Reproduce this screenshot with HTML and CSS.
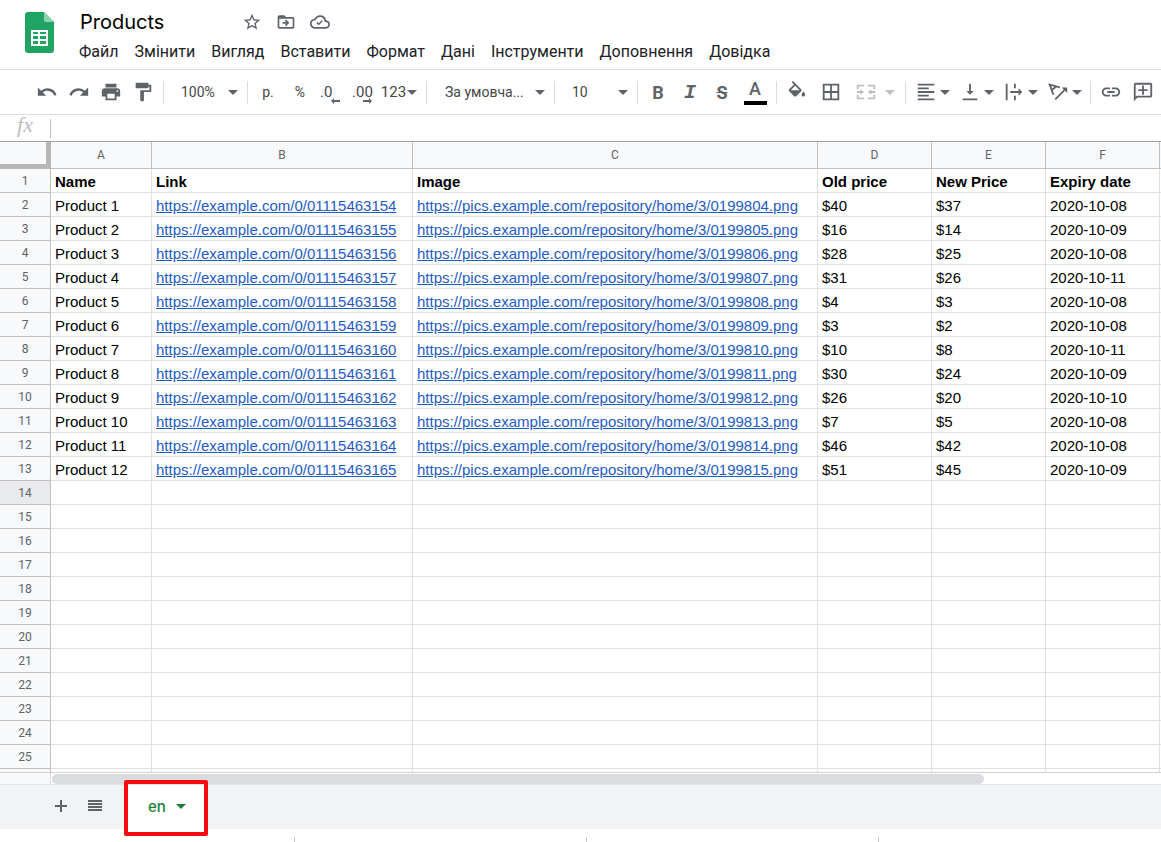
FILE: index.html
```html
<!DOCTYPE html>
<html lang="uk">
<head>
    <meta charset="UTF-8">
    <meta name="viewport" content="width=device-width, initial-scale=1.0">
    <title>Products</title>
    <link rel="stylesheet" href="styles.css">
</head>
<body>
    <header class="header">
        <svg class="logo" viewBox="0 0 29 41" aria-hidden="true">
            <path fill="#1fa463" d="M3 0h16l10 10v28a3 3 0 0 1-3 3H3a3 3 0 0 1-3-3V3a3 3 0 0 1 3-3z"/>
            <path fill="#8ed1b1" d="M19 0l10 10h-8a2 2 0 0 1-2-2z"/>
            <path fill="#fff" fill-rule="evenodd" d="M6 18h17v16H6zM8 20v2h5v-2zm7 0v2h6v-2zM8 24v3h5v-3zm7 0v3h6v-3zM8 29v3h5v-3zm7 0v3h6v-3z"/>
        </svg>
        <div class="header-main">
            <div class="title-row">
                <input class="doc-title" type="text" value="Products" aria-label="Назва">
                <button class="title-btn" aria-label="Позначити">
                    <svg viewBox="0 0 24 24"><path d="M22 9.24l-7.19-.62L12 2 9.19 8.63 2 9.24l5.46 4.73L5.82 21 12 17.27 18.18 21l-1.63-7.03L22 9.24zM12 15.4l-3.76 2.27 1-4.28-3.32-2.88 4.38-.38L12 6.1l1.71 4.04 4.38.38-3.32 2.88 1 4.28L12 15.4z"/></svg>
                </button>
                <button class="title-btn" aria-label="Перемістити">
                    <svg viewBox="0 0 24 24"><path d="M20 6h-8l-2-2H4c-1.100 0-2 .9-2 2v12c0 1.100.9 2 2 2h16c1.100 0 2-.9 2-2V8c0-1.100-.9-2-2-2zm0 12H4V8h16v10zm-8-1l4-4-4-4-1.400 1.400L12.200 12H8v2h4.200l-1.600 1.600z"/></svg>
                </button>
                <button class="title-btn" aria-label="Стан документа">
                    <svg viewBox="0 0 24 24"><path d="M19.350 10.040A7.490 7.490 0 0 0 12 4C9.110 4 6.600 5.640 5.350 8.040A5.994 5.994 0 0 0 0 14c0 3.310 2.690 6 6 6h13c2.760 0 5-2.240 5-5 0-2.640-2.050-4.780-4.650-4.960zM19 18H6c-2.210 0-4-1.790-4-4 0-2.050 1.530-3.760 3.560-3.970l1.070-.11.5-.95A5.469 5.469 0 0 1 12 6c2.620 0 4.880 1.860 5.390 4.430l.3 1.500 1.530.11A2.980 2.980 0 0 1 22 15c0 1.650-1.350 3-3 3zm-8.500-4.600l-1.600-1.600-1.300 1.300 2.900 2.900 4.900-4.900-1.300-1.300z"/></svg>
                </button>
            </div>
            <nav class="menu">
                <a href="#">Файл</a>
                <a href="#">Змінити</a>
                <a href="#">Вигляд</a>
                <a href="#">Вставити</a>
                <a href="#">Формат</a>
                <a href="#">Дані</a>
                <a href="#">Інструменти</a>
                <a href="#">Доповнення</a>
                <a href="#">Довідка</a>
            </nav>
        </div>
    </header>

    <div class="toolbar">
        <button class="tool" aria-label="Скасувати">
            <svg viewBox="0 0 24 24"><path d="M12.500 8c-2.650 0-5.050.99-6.900 2.600L2 7v9h9l-3.620-3.620c1.390-1.160 3.160-1.880 5.120-1.880 3.540 0 6.550 2.310 7.600 5.500l2.370-.78C21.080 11.030 17.150 8 12.500 8z"/></svg>
        </button>
        <button class="tool" aria-label="Повторити">
            <svg viewBox="0 0 24 24"><path d="M18.400 10.600C16.550 8.990 14.150 8 11.500 8c-4.650 0-8.580 3.030-9.960 7.220L3.900 16c1.050-3.190 4.050-5.500 7.600-5.500 1.950 0 3.730.72 5.120 1.880L13 16h9V7l-3.600 3.600z"/></svg>
        </button>
        <button class="tool" aria-label="Друк">
            <svg viewBox="0 0 24 24"><path d="M19 8H5c-1.660 0-3 1.340-3 3v6h4v4h12v-4h4v-6c0-1.660-1.340-3-3-3zm-3 11H8v-5h8v5zm3-7c-.55 0-1-.45-1-1s.45-1 1-1 1 .45 1 1-.45 1-1 1zM18 3H6v4h12V3z"/></svg>
        </button>
        <button class="tool" aria-label="Копіювати формат">
            <svg viewBox="0 0 24 24"><path d="M18 4V3c0-.55-.45-1-1-1H5c-.55 0-1 .45-1 1v4c0 .55.45 1 1 1h12c.55 0 1-.45 1-1V6h1v4H9v11c0 .55.45 1 1 1h2c.55 0 1-.45 1-1v-9h8V4h-3z"/></svg>
        </button>
        <span class="sep"></span>
        <div class="dropdown zoom">
            <select aria-label="Масштаб"><option>100%</option></select>
        </div>
        <span class="sep"></span>
        <button class="tool">р.</button>
        <button class="tool">%</button>
        <button class="tool decimals">.0
            <svg viewBox="0 0 9 6"><path d="M0 3l3-3v2h6v2H3v2z"/></svg>
        </button>
        <button class="tool decimals">.00
            <svg viewBox="0 0 9 6"><path d="M9 3L6 0v2H0v2h6v2z"/></svg>
        </button>
        <button class="tool formats">123<i class="arrow"></i></button>
        <span class="sep"></span>
        <div class="dropdown font">
            <select aria-label="Шрифт"><option>За умовча...</option></select>
        </div>
        <span class="sep"></span>
        <div class="dropdown size">
            <select aria-label="Розмір шрифту"><option>10</option></select>
        </div>
        <span class="sep"></span>
        <button class="tool bold">B</button>
        <button class="tool italic">I</button>
        <button class="tool strike">S</button>
        <button class="tool color"><span>A</span></button>
        <span class="sep"></span>
        <button class="tool" aria-label="Колір заливки">
            <svg viewBox="0 0 24 24"><path d="M16.560 8.940L7.620 0 6.210 1.410l2.380 2.380-5.150 5.150c-.59.59-.59 1.540 0 2.120l5.500 5.500c.29.29.68.44 1.060.44s.77-.15 1.060-.44l5.500-5.500c.59-.58.59-1.530 0-2.120zM5.210 10L10 5.210 14.790 10H5.210zM19 11.500s-2 2.170-2 3.500c0 1.100.9 2 2 2s2-.9 2-2c0-1.330-2-3.500-2-3.500z"/></svg>
        </button>
        <button class="tool borders" aria-label="Межі">
            <svg viewBox="0 0 24 24"><path d="M3 3v18h18V3H3zm8 16H5v-6h6v6zm0-8H5V5h6v6zm8 8h-6v-6h6v6zm0-8h-6V5h6v6z"/></svg>
        </button>
        <button class="tool merge" disabled aria-label="Об'єднати клітинки">
            <svg viewBox="0 0 24 24"><path d="M2 4h8v2H4v3H2zM14 4h8v5h-2V6h-6zM2 15h2v3h6v2H2zM20 15h2v5h-8v-2h6zM2 11h4V9l4 3-4 3v-2H2zM22 11h-4V9l-4 3 4 3v-2h4z"/></svg>
            <i class="arrow"></i>
        </button>
        <span class="sep"></span>
        <button class="tool wide" aria-label="Вирівнювання по горизонталі">
            <svg viewBox="0 0 24 24"><path d="M15 15H3v2h12v-2zm0-8H3v2h12V7zM3 13h18v-2H3v2zm0 8h18v-2H3v2zM3 3v2h18V3H3z"/></svg>
            <i class="arrow"></i>
        </button>
        <button class="tool wide" aria-label="Вирівнювання по вертикалі">
            <svg viewBox="0 0 24 24"><path d="M16 11h-3V3h-2v8H8l4 4 4-4zM4 19v2h16v-2H4z"/></svg>
            <i class="arrow"></i>
        </button>
        <button class="tool wide" aria-label="Перенесення тексту">
            <svg viewBox="0 0 24 24"><path d="M3 3h2v18H3zM12 3h2v5h-2zM12 16h2v5h-2zM8 11h9V8l4 4-4 4v-3H8z"/></svg>
            <i class="arrow"></i>
        </button>
        <button class="tool wide" aria-label="Обертання тексту">
            <svg viewBox="0 0 24 24"><path class="line" d="M7 15L3 4l11 3M5 10l5-4M9 20l10-10"/><path d="M16 7h6v6z"/></svg>
            <i class="arrow"></i>
        </button>
        <span class="sep"></span>
        <button class="tool" aria-label="Вставити посилання">
            <svg viewBox="0 0 24 24"><path d="M3.900 12c0-1.710 1.390-3.100 3.100-3.100h4V7H7c-2.760 0-5 2.240-5 5s2.240 5 5 5h4v-1.900H7c-1.710 0-3.100-1.390-3.100-3.100zM8 13h8v-2H8v2zm9-6h-4v1.900h4c1.710 0 3.100 1.390 3.100 3.100s-1.390 3.100-3.100 3.100h-4V17h4c2.760 0 5-2.240 5-5s-2.240-5-5-5z"/></svg>
        </button>
        <button class="tool" aria-label="Додати коментар">
            <svg viewBox="0 0 24 24"><path d="M20 2H4c-1.100 0-2 .9-2 2v18l4-4h14c1.100 0 2-.9 2-2V4c0-1.100-.9-2-2-2zm0 14H5.200L4 17.200V4h16v12zM11 15h2v-4h4V9h-4V5h-2v4H7v2h4z"/></svg>
        </button>
    </div>

    <div class="formula-bar">
        <label class="fx" for="formula">fx</label>
        <input class="formula" id="formula" type="text">
    </div>

    <main class="grid">
        <table>
            <colgroup>
                <col class="col-num">
                <col class="col-name">
                <col class="col-link">
                <col class="col-image">
                <col class="col-data">
                <col class="col-data">
                <col class="col-data">
                <col>
            </colgroup>
            <thead>
                <tr>
                    <th class="corner"></th>
                    <th>A</th>
                    <th>B</th>
                    <th>C</th>
                    <th>D</th>
                    <th>E</th>
                    <th>F</th>
                    <th></th>
                </tr>
            </thead>
            <tbody id="rows"></tbody>
        </table>
    </main>

    <div class="scroll">
        <div class="scroll-track"><div class="scroll-thumb"></div></div>
    </div>

    <div class="tabs">
        <button class="tab-btn" aria-label="Додати аркуш">
            <svg viewBox="0 0 14 14"><path d="M6 1h2v5h5v2H8v5H6V8H1V6h5z"/></svg>
        </button>
        <button class="tab-btn" aria-label="Усі аркуші">
            <svg viewBox="0 0 14 14"><path d="M0 1h14v2H0zM0 4h14v2H0zM0 7h14v2H0zM0 10h14v2H0z"/></svg>
        </button>
        <div class="tab-wrap">
            <button class="tab">en<i class="arrow"></i></button>
            <span class="highlight"></span>
        </div>
    </div>

    <footer class="footer"><span></span><span></span><span></span></footer>

    <script>
        // old price, new price, expiry date
        const products = [
            [40, 37, '2020-10-08'],
            [16, 14, '2020-10-09'],
            [28, 25, '2020-10-08'],
            [31, 26, '2020-10-11'],
            [4, 3, '2020-10-08'],
            [3, 2, '2020-10-08'],
            [10, 8, '2020-10-11'],
            [30, 24, '2020-10-09'],
            [26, 20, '2020-10-10'],
            [7, 5, '2020-10-08'],
            [46, 42, '2020-10-08'],
            [51, 45, '2020-10-09']
        ];

        function link(url) {
            return `<a href="${url}">${url}</a>`;
        }

        const rows = [['Name', 'Link', 'Image', 'Old price', 'New Price', 'Expiry date']];
        products.forEach((p, i) => {
            rows.push([
                `Product ${i + 1}`,
                link(`https://example.com/0/0${1115463154 + i}`),
                link(`https://pics.example.com/repository/home/3/0${199804 + i}.png`),
                `$${p[0]}`,
                `$${p[1]}`,
                p[2]
            ]);
        });

        let html = '';
        for (let n = 1; n <= 25; n++) {
            const cells = rows[n - 1] || ['', '', '', '', '', ''];
            const cls = n === 1 ? 'titles' : n === 14 ? 'active' : '';
            html += `<tr class="${cls}"><th>${n}</th>${cells.map(c => `<td>${c}</td>`).join('')}<td></td></tr>`;
        }
        // cut off row at the bottom
        html += '<tr><th></th>' + '<td></td>'.repeat(7) + '</tr>';
        document.getElementById('rows').innerHTML = html;
    </script>
</body>
</html>
```

FILE: styles.css
```css
* {
    box-sizing: border-box;
}
body {
    margin: 0;
    height: 100vh;
    display: flex;
    flex-direction: column;
    overflow: hidden;
    font-family: Roboto, Arial, sans-serif;
    background: #fff;
    color: #202124;
}
button, input, select {
    font-family: inherit;
    background: none;
    border: none;
    padding: 0;
    margin: 0;
    outline: none;
}
button {
    cursor: pointer;
}
svg {
    fill: #5f6368;
    flex: none;
}

/* Header */
.header {
    display: flex;
    flex: none;
    height: 70px;
    padding: 8px 0 0 25px;
    border-bottom: 1px solid #dadce0;
}
.logo {
    width: 29px;
    height: 41px;
    margin-top: 4px;
}
.header-main {
    margin-left: 25px;
}
.title-row {
    display: flex;
    align-items: center;
    height: 28px;
}
.doc-title {
    width: 156px;
    height: 28px;
    padding-left: 1px;
    font-family: Inter, Roboto, sans-serif;
    font-size: 20px;
    color: #000;
}
.title-btn {
    display: flex;
    justify-content: center;
    width: 34px;
}
.title-btn svg {
    width: 20px;
    height: 20px;
}
.menu {
    display: flex;
    gap: 16px;
    margin-top: 6px;
}
.menu a {
    font-size: 16px;
    line-height: 20px;
    color: #202124;
    text-decoration: none;
    white-space: nowrap;
}

/* Toolbar */
.toolbar {
    display: flex;
    flex: none;
    align-items: center;
    height: 45px;
    padding-left: 31px;
    border-bottom: 1px solid #dadce0;
}
.tool {
    position: relative;
    display: flex;
    flex: none;
    align-items: center;
    justify-content: center;
    width: 32px;
    height: 28px;
    font-size: 14px;
    color: #444746;
}
.tool svg {
    width: 22px;
    height: 22px;
}
.tool .line {
    fill: none;
    stroke: #5f6368;
    stroke-width: 2;
}
.sep {
    flex: none;
    width: 1px;
    height: 23px;
    margin: 0 4px;
    background: #dadce0;
}
.arrow {
    width: 0;
    height: 0;
    border: 5px solid transparent;
    border-top-color: #5f6368;
    border-bottom: none;
}
.dropdown {
    position: relative;
    flex: none;
}
.dropdown::after {
    content: "";
    position: absolute;
    right: 5px;
    top: 12px;
    border: 5px solid transparent;
    border-top-color: #5f6368;
    border-bottom: none;
    pointer-events: none;
}
.dropdown select {
    appearance: none;
    width: 100%;
    height: 28px;
    padding-left: 13px;
    font-size: 14px;
    color: #444746;
}
.zoom {
    width: 75px;
}
.font {
    width: 119px;
}
.font select {
    padding-left: 14px;
}
.size {
    width: 74px;
}
.decimals {
    justify-content: flex-start;
    padding-left: 4px;
    font-size: 15px;
}
.decimals svg {
    position: absolute;
    right: 8px;
    bottom: 2px;
    width: 9px;
    height: 6px;
}
.formats {
    width: 38px;
    margin-right: 4px;
    gap: 1px;
    font-size: 15px;
}
.bold {
    font-size: 18px;
    font-weight: bold;
    color: #5f6368;
}
.italic {
    font-family: "Liberation Mono", monospace;
    font-size: 20px;
    font-weight: bold;
    font-style: italic;
    color: #5f6368;
}
.strike {
    font-size: 18px;
    font-weight: bold;
    text-decoration: line-through;
    color: #5f6368;
}
.color {
    width: 34px;
}
.color span {
    width: 23px;
    height: 26px;
    font-size: 18px;
    font-weight: 500;
    line-height: 20px;
    color: #5f6368;
    border-bottom: 4px solid #000;
}
.borders {
    width: 36px;
}
.merge {
    width: 52px;
    gap: 8px;
    opacity: 0.4;
}
.wide {
    width: 44px;
    gap: 3px;
}

/* Formula bar */
.formula-bar {
    display: flex;
    flex: none;
    align-items: center;
    height: 27px;
    border-bottom: 1px solid #a0a0a0;
}
.fx {
    width: 50px;
    height: 26px;
    text-align: center;
    font-family: "Liberation Serif", serif;
    font-size: 22px;
    font-style: italic;
    line-height: 20px;
    color: #bdbdbd;
}
.formula {
    flex: 1;
    height: 19px;
    padding-left: 6px;
    border-left: 1px solid #c0c0c0;
}

/* Spreadsheet */
.grid {
    flex: 1;
    min-height: 0;
    overflow: hidden;
    border-bottom: 1px solid #d0d0d0;
}
table {
    width: 100%;
    table-layout: fixed;
    border-collapse: separate;
    border-spacing: 0;
}
.col-num {
    width: 51px;
}
.col-name {
    width: 101px;
}
.col-link {
    width: 261px;
}
.col-image {
    width: 405px;
}
.col-data {
    width: 114px;
}
th {
    height: 24px;
    padding: 0;
    font-size: 12px;
    font-weight: normal;
    line-height: 16px;
    color: #5f6368;
    background: #f8f9fa;
    border-right: 1px solid #c0c0c0;
    border-bottom: 1px solid #c0c0c0;
}
thead th {
    height: 27px;
}
.corner {
    border-right: 5px solid #b7b7b7;
    border-bottom: 5px solid #b7b7b7;
}
td {
    height: 24px;
    padding: 2px 0 0 4px;
    font-family: "Liberation Sans", Arial, sans-serif;
    font-size: 15px;
    line-height: 20px;
    color: #000;
    white-space: nowrap;
    border-right: 1px solid #e0e0e0;
    border-bottom: 1px solid #e0e0e0;
}
th:last-child, td:last-child {
    padding: 0;
    border-right: none;
}
td a {
    color: #1f5bc4;
}
.titles td {
    font-weight: bold;
}
.active th {
    background: #e8eaed;
}

/* Horizontal scroll bar */
.scroll {
    flex: none;
    height: 11px;
    padding-left: 50px;
    background: #f8f9fa;
}
.scroll-track {
    height: 11px;
    padding: 1px 0 0 1px;
    background: #fff;
    border-left: 1px solid #dadce0;
}
.scroll-thumb {
    width: 84%;
    height: 10px;
    border-radius: 5px;
    background: #dadce0;
}

/* Sheet tabs */
.tabs {
    display: flex;
    flex: none;
    height: 45px;
    padding-left: 44px;
    background: #f1f3f4;
    border-top: 1px solid #e3e5e8;
}
.tab-btn {
    display: flex;
    align-items: center;
    justify-content: center;
    width: 34px;
    height: 42px;
}
.tab-btn svg {
    width: 14px;
    height: 14px;
}
.tab-wrap {
    position: relative;
    margin-left: 16px;
}
.tab {
    display: flex;
    align-items: center;
    gap: 10px;
    height: 44px;
    padding: 0 18px 2px 20px;
    font-family: Inter, Roboto, sans-serif;
    font-size: 15px;
    font-weight: 500;
    color: #188038;
    background: #fff;
}
.tab .arrow {
    border-top-color: #188038;
}
/* Red frame over the current tab */
.highlight {
    position: absolute;
    inset: -5px -4px -7px -4px;
    border: 4px solid #f60b0e;
    border-radius: 2px;
    pointer-events: none;
}

/* Bottom strip */
.footer {
    display: flex;
    flex: none;
    height: 13px;
    padding: 8px 0 0 3px;
}
.footer span {
    width: 292px;
    border-right: 1px solid #c4c7c5;
}
```
